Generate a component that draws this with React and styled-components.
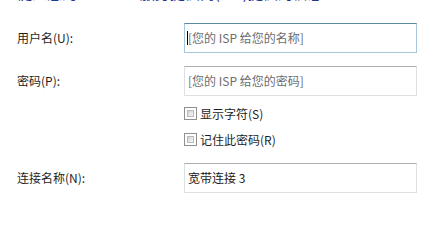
import React from "react";
import styled, { createGlobalStyle } from "styled-components";

const Global = createGlobalStyle`
  html, body { margin: 0; padding: 0; background: #ffffff; }
  body {
    font-family: "Noto Sans CJK SC", "Noto Sans", sans-serif;
    font-size: 12px;
    color: #1e1e1e;
    overflow: hidden;
  }
`;

const Page = styled.div`
  width: 438px;
  height: 205px;
  overflow: hidden;
  display: flex;
  flex-direction: column;
  padding-left: 17px;
  box-sizing: border-box;
`;

const Heading = styled.div`
  margin-top: -17px;
  height: 22px;
  line-height: 20px;
  font-size: 15px;
  color: #1f3a8f;
  white-space: nowrap;
`;

const Row = styled.div`
  display: flex;
  align-items: center;
  margin-top: ${(p) => p.$gap}px;
`;

const Label = styled.div`
  width: 167px;
  flex: none;
  line-height: 16px;
  color: #1e1e1e;
`;

const TextBox = styled.div`
  width: 233px;
  height: 30px;
  box-sizing: border-box;
  display: flex;
  align-items: center;
  padding-left: 3px;
  border: 1px solid ${(p) => (p.$focused ? "#a9c6d8" : "#dcdfe4")};
  border-top-color: ${(p) => (p.$focused ? "#5b8aa6" : "#abadb3")};
  color: ${(p) => (p.$cue ? "#6d6d6d" : "#1a1a1a")};
  white-space: nowrap;
  line-height: 16px;
`;

const Caret = styled.span`
  display: inline-block;
  width: 1px;
  height: 14px;
  background: #000;
  margin-left: -1px;
`;

const CheckRow = styled.label`
  display: flex;
  align-items: center;
  gap: 3px;
  margin-left: 167px;
  margin-top: ${(p) => p.$gap}px;
  height: 13px;
  line-height: 13px;
  color: #1e1e1e;
`;

const Box = styled.span`
  width: 13px;
  height: 13px;
  box-sizing: border-box;
  border: 1px solid #8e8f8f;
  background: #ffffff;
  padding: 2px;
  display: flex;
  flex: none;
  &::after {
    content: "";
    flex: 1;
    border: 1px solid #b9babb;
    background: linear-gradient(135deg, #d0d1d2 0%, #e9eaea 60%, #f6f6f6 100%);
  }
`;

export default function App() {
  return (
    <>
      <Global />
      <Page>
        <Heading>键入您的 Internet 服务提供商(ISP)提供的信息</Heading>
        <Row $gap={18}>
          <Label>用户名(U):</Label>
          <TextBox $focused $cue>
            <Caret />
            [您的 ISP 给您的名称]
          </TextBox>
        </Row>
        <Row $gap={13}>
          <Label>密码(P):</Label>
          <TextBox $cue>[您的 ISP 给您的密码]</TextBox>
        </Row>
        <CheckRow $gap={11}>
          <Box />
          显示字符(S)
        </CheckRow>
        <CheckRow $gap={13}>
          <Box />
          记住此密码(R)
        </CheckRow>
        <Row $gap={17}>
          <Label>连接名称(N):</Label>
          <TextBox>宽带连接 3</TextBox>
        </Row>
      </Page>
    </>
  );
}
